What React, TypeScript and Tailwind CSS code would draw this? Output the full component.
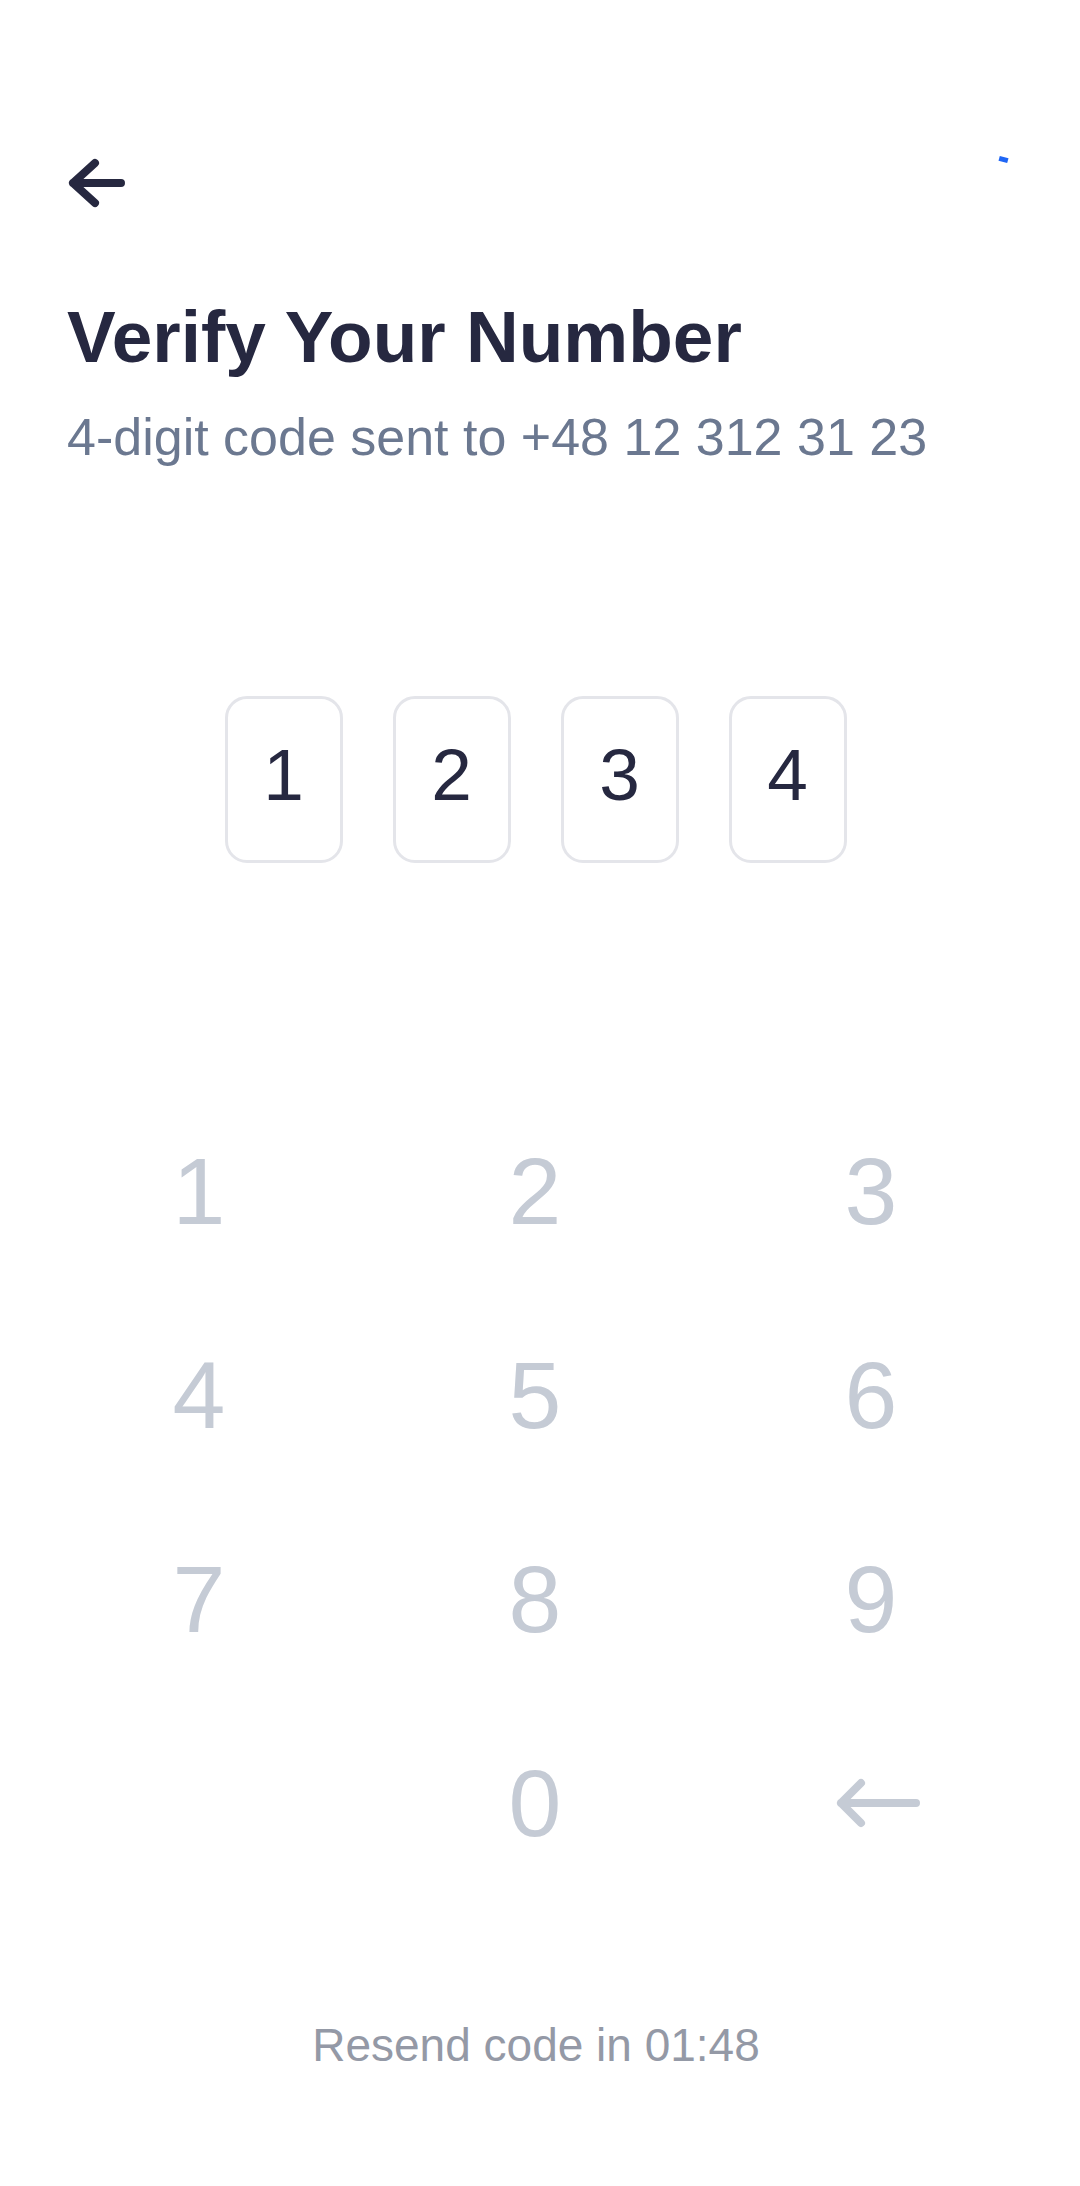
import React from "react";

const font = { fontFamily: '"Liberation Sans", Arial, sans-serif' };

const keys = ["1", "2", "3", "4", "5", "6", "7", "8", "9", "", "0", "back"];
const code = ["1", "2", "3", "4"];

function BackArrow() {
  return (
    <svg width="64" height="56" viewBox="0 0 64 56" fill="none">
      <path
        d="M30 8 L8 28 L30 48 M8 28 H56"
        stroke="#262840"
        strokeWidth="8"
        strokeLinecap="round"
        strokeLinejoin="round"
      />
    </svg>
  );
}

function DeleteArrow() {
  return (
    <svg width="89" height="56" viewBox="0 0 89 56" fill="none" className="ml-[12px]">
      <path
        d="M28 8 L8 28 L28 48 M8 28 H83"
        stroke="#c5cbd5"
        strokeWidth="8"
        strokeLinecap="round"
        strokeLinejoin="round"
      />
    </svg>
  );
}

export default function App() {
  return (
    <div className="w-[1080px] h-[2186px] bg-white flex flex-col" style={font}>
      {/* top bar */}
      <div className="flex justify-between items-start pt-[155px] pl-[65px] pr-[72px]">
        <BackArrow />
        <div className="mt-[2px] w-[9px] h-[5px] bg-[#1f66f5] rotate-[15deg]" />
      </div>

      <h1 className="mt-[89px] pl-[67px] text-[73px] leading-none font-bold text-[#262840]">
        Verify Your Number
      </h1>
      <p className="mt-[38px] pl-[67px] text-[52px] leading-none text-[#6b7890]">
        4-digit code sent to +48 12 312 31 23
      </p>

      {/* code boxes */}
      <div className="mt-[233px] flex justify-center gap-[50px] pr-[9px]">
        {code.map((d, i) => (
          <div
            key={i}
            className="w-[118px] h-[167px] rounded-[22px] border-[3px] border-[#e4e5ea] flex items-center justify-center pb-[10px] text-[73px] leading-none text-[#262840]"
          >
            {d}
          </div>
        ))}
      </div>

      {/* keypad */}
      <div className="mt-[226px] pl-[31px] pr-[41px] grid grid-cols-3">
        {keys.map((k, i) => (
          <div
            key={i}
            className="h-[204px] flex items-center justify-center text-[95px] leading-none text-[#c5cbd5]"
          >
            {k === "back" ? <DeleteArrow /> : k}
          </div>
        ))}
      </div>

      <p className="mt-[117px] text-center pr-[8px] text-[46px] leading-none text-[#9499a6]">
        Resend code in 01:48
      </p>
    </div>
  );
}
